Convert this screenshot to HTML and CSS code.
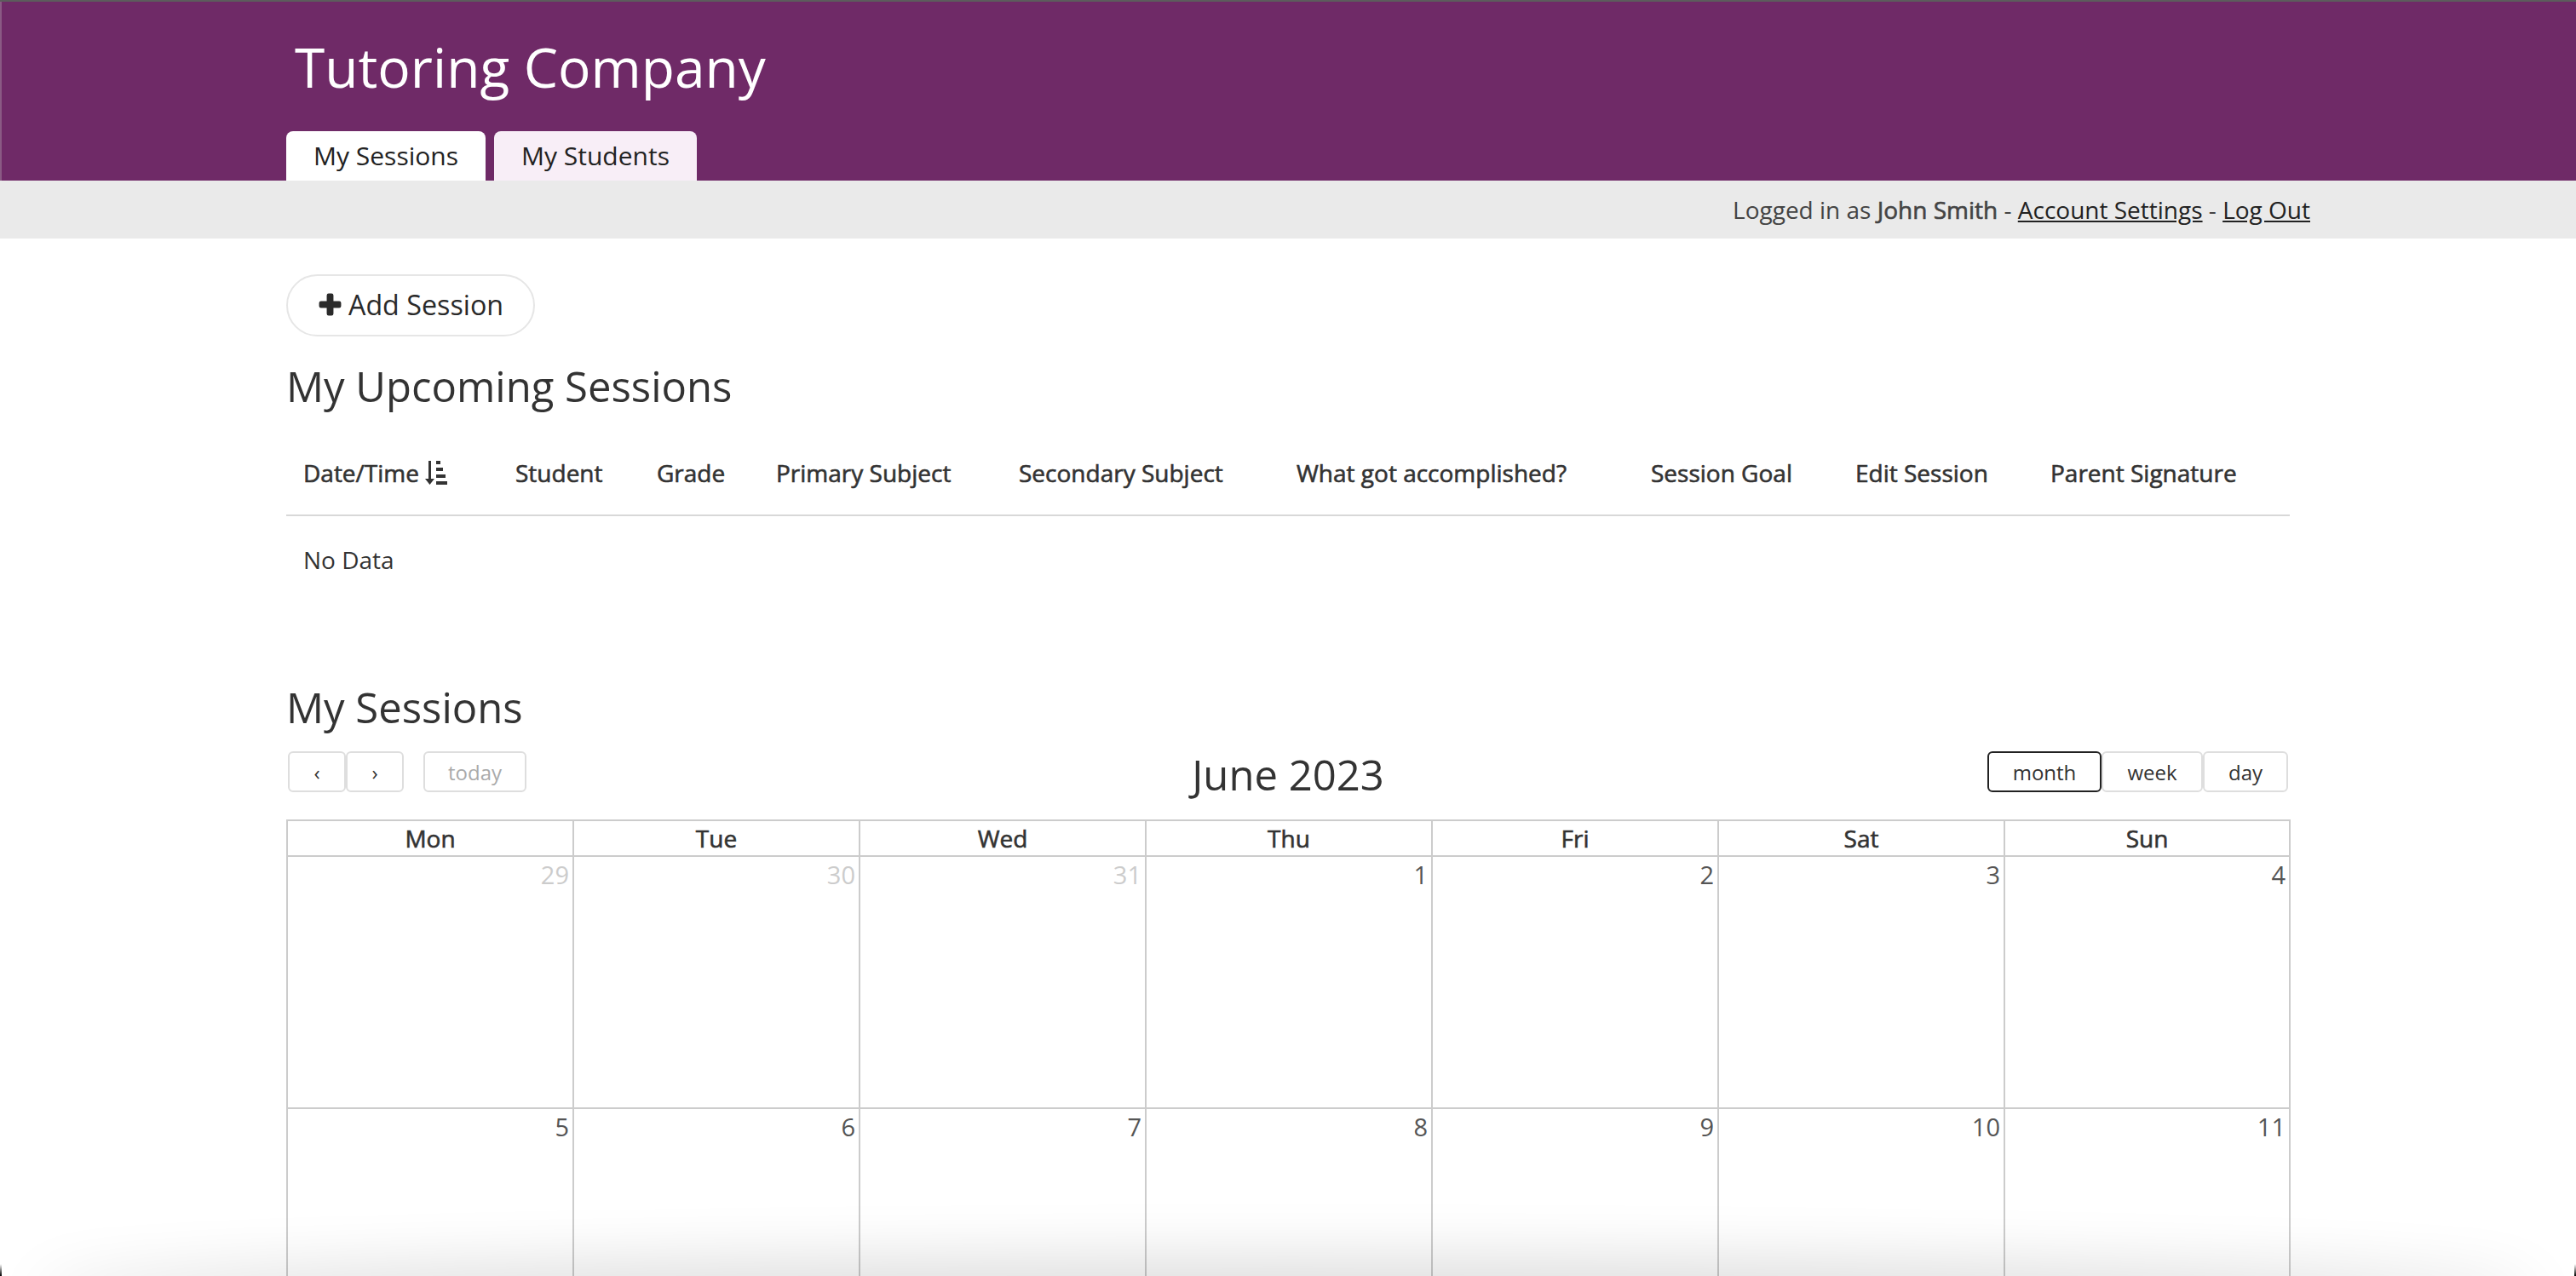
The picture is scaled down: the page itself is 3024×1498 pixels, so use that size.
FILE: index.html
```html
<!DOCTYPE html>
<html lang="en">
<head>
<meta charset="utf-8">
<title>Tutoring Company</title>
<link rel="stylesheet" href="styles.css">
</head>
<body>
<header class="site-header">
  <div class="wrap">
    <div class="brand">Tutoring Company</div>
    <nav class="tabs">
      <a class="tab tab-active">My Sessions</a>
      <a class="tab tab-idle">My Students</a>
    </nav>
  </div>
</header>
<div class="userbar">
  <div class="wrap userbar-inner">Logged in as&nbsp;<strong class="user">John Smith</strong>&nbsp;-&nbsp;<a class="ulink">Account Settings</a>&nbsp;-&nbsp;<a class="ulink">Log Out</a></div>
</div>
<main class="wrap main">
  <button class="add-btn">
    <svg class="plus" viewBox="0 0 24 24"><path d="M8.500 2.500a2 2 0 0 1 2-2h3a2 2 0 0 1 2 2v6h6a2 2 0 0 1 2 2v3a2 2 0 0 1-2 2h-6v6a2 2 0 0 1-2 2h-3a2 2 0 0 1-2-2v-6h-6a2 2 0 0 1-2-2v-3a2 2 0 0 1 2-2h6z"/></svg>
    Add Session
  </button>
  <h2 class="section-title first">My Upcoming Sessions</h2>
  <table class="sessions">
    <thead>
      <tr>
        <th class="c1">Date/Time <svg class="sort" viewBox="0 0 26 28"><path d="M4 0h3v21h4l-5.500 7L0 21h4z"/><rect x="13" y="0" width="5" height="4"/><rect x="13" y="8" width="8" height="4"/><rect x="13" y="16" width="11" height="4"/><rect x="13" y="24" width="13" height="4"/></svg></th>
        <th class="c2">Student</th>
        <th class="c3">Grade</th>
        <th class="c4">Primary Subject</th>
        <th class="c5">Secondary Subject</th>
        <th class="c6">What got accomplished?</th>
        <th class="c7">Session Goal</th>
        <th class="c8">Edit Session</th>
        <th class="c9">Parent Signature</th>
      </tr>
    </thead>
    <tbody>
      <tr><td colspan="9">No Data</td></tr>
    </tbody>
  </table>
  <h2 class="section-title second">My Sessions</h2>
  <div class="cal-toolbar">
    <div class="cal-left">
      <div class="btn-group">
        <button class="cal-btn nav-btn">‹</button>
        <button class="cal-btn nav-btn">›</button>
      </div>
      <button class="cal-btn today">today</button>
    </div>
    <div class="cal-title">June 2023</div>
    <div class="btn-group">
      <button class="cal-btn view view-on">month</button>
      <button class="cal-btn view">week</button>
      <button class="cal-btn view">day</button>
    </div>
  </div>
  <table class="calendar">
    <thead>
      <tr><th>Mon</th><th>Tue</th><th>Wed</th><th>Thu</th><th>Fri</th><th>Sat</th><th>Sun</th></tr>
    </thead>
    <tbody>
      <tr>
        <td class="muted">29</td><td class="muted">30</td><td class="muted">31</td><td>1</td><td>2</td><td>3</td><td>4</td>
      </tr>
      <tr>
        <td>5</td><td>6</td><td>7</td><td>8</td><td>9</td><td>10</td><td>11</td>
      </tr>
    </tbody>
  </table>
</main>
<div class="window-shadow"></div>
<div class="corner corner-left"></div>
<div class="corner corner-right"></div>
</body>
</html>
```

FILE: styles.css
```css
* { box-sizing: border-box; }
html, body { margin: 0; height: 1498px; overflow: hidden; background: #fff; }
body { font-family: "Open Sans", sans-serif; font-size: 28px; color: #333; position: relative; }
.wrap { width: 2352px; margin: 0 auto; }

.site-header { height: 212px; background: #6f2a67; border-top: 2px solid #5c5c5c; box-shadow: inset 2px 0 0 #8a5a84; }
.brand { font-size: 64px; line-height: 86px; color: #fff; padding: 34px 0 0 10px; height: 152px; }
.tabs { display: flex; gap: 10px; }
.tab { height: 58px; padding: 0 32px; border-radius: 8px 8px 0 0; font-size: 30px; line-height: 58px; color: #222; }
.tab-active { background: #fff; }
.tab-idle { background: #f8eef7; }

.userbar { height: 68px; background: #eaeaea; }
.userbar-inner { display: flex; justify-content: flex-end; font-size: 28px; line-height: 68px; color: #444; transform: translateX(24px); }
.user { font-weight: 400; -webkit-text-stroke: 0.6px currentColor; }
.ulink { color: #222; text-decoration: underline; }

.main { padding-top: 42px; }
.add-btn { display: flex; align-items: center; gap: 8px; height: 73px; width: 292px; padding: 0 0 2px 36px; background: #fff; border: 2px solid #e6e6e6; border-radius: 37px; font: 32.250px "Open Sans", sans-serif; color: #2a2a2a; }
.plus { width: 27px; height: 27px; fill: #2a2a2a; }
.section-title { margin: 0; font-size: 49px; font-weight: 400; line-height: 66px; color: #333; }
.first { margin-top: 25px; }
.second { margin-top: 88px; }

.sessions { width: 2352px; border-collapse: collapse; table-layout: fixed; margin-top: 22px; }
.sessions th { height: 97px; padding: 0 0 2px 20px; text-align: left; font-size: 28px; font-weight: 400; -webkit-text-stroke: 0.6px currentColor; color: #333; border-bottom: 2px solid #d8d8d8; white-space: nowrap; }
.sessions td { height: 104px; padding: 0 0 2px 20px; font-size: 28px; color: #333; }
.sort { width: 26px; height: 28px; fill: #333; vertical-align: -3px; }
.c1 { width: 249px; } .c2 { width: 166px; } .c3 { width: 140px; } .c4 { width: 285px; } .c5 { width: 326px; }
.c6 { width: 416px; } .c7 { width: 240px; } .c8 { width: 229px; } .c9 { width: 301px; }

.cal-toolbar { display: flex; justify-content: space-between; align-items: flex-start; height: 80px; margin-top: 19px; padding: 0 2px; position: relative; }
.cal-left { display: flex; gap: 23px; }
.btn-group { display: flex; }
.cal-btn { height: 48px; border: 2px solid #dedede; border-radius: 6px; background: #fff; font: 24px "Open Sans", sans-serif; color: #333; padding: 0; }
.nav-btn { width: 68px; }
.today { width: 121px; color: #aaa; }
.view { width: 119px; }
.view:last-child { width: 100px; }
.view-on { width: 134px; border-color: #222; }
.cal-title { position: absolute; left: 0; right: 0; top: -2px; text-align: center; font-size: 49px; line-height: 58px; color: #333; }

.calendar { width: 2353px; border-collapse: collapse; table-layout: fixed; }
.calendar th { width: 336px; height: 42px; padding: 0; border: 2px solid #ccc; font-size: 28px; font-weight: 400; -webkit-text-stroke: 0.6px currentColor; line-height: 1; color: #333; }
.calendar th:last-child { width: 335px; }
.calendar td { height: 296px; padding: 1px 4px 0 0; border: 2px solid #ccc; vertical-align: top; text-align: right; font-size: 29px; line-height: 40px; color: #555; }
.calendar .muted { color: #ccc; }

.window-shadow { position: absolute; left: 60px; right: 60px; top: 1498px; height: 40px; border-radius: 50%; box-shadow: 0 0 70px 20px rgba(0,0,0,.14); }
.corner { position: absolute; top: 1484px; width: 2px; height: 14px; background: linear-gradient(rgba(0,0,0,0), #000); }
.corner-left { left: 0; }
.corner-right { right: 0; }
```
